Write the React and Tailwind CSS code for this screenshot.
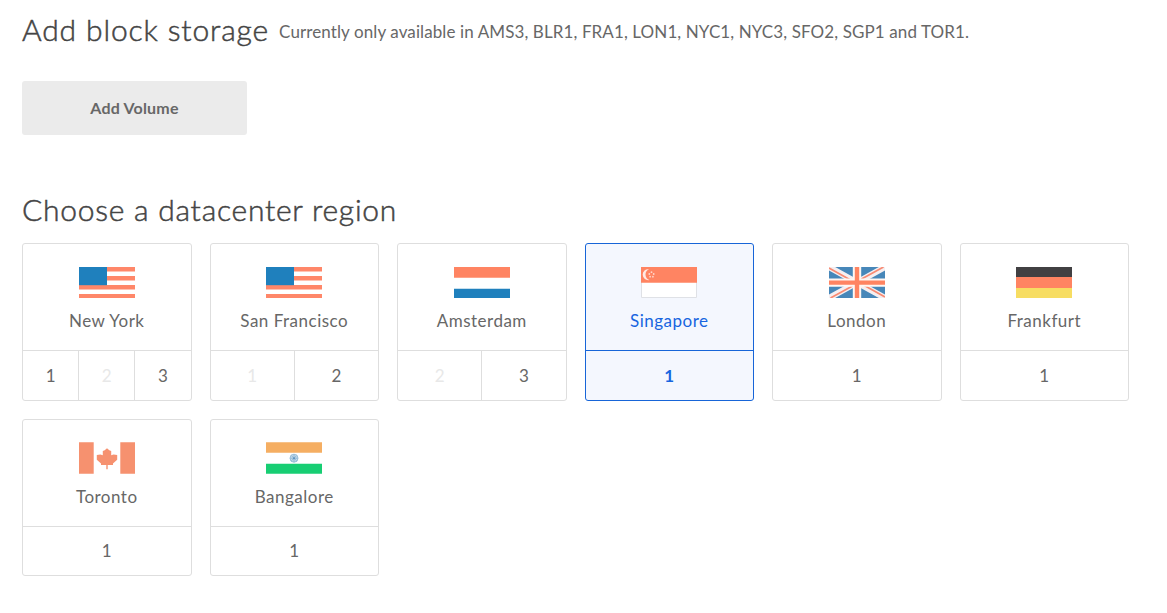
import React, { useState } from "react";
import clsx from "clsx";

const UsFlag = () => (
  <svg width="56" height="31" viewBox="0 0 56 31">
    <path d="M0 0H56V31H0Z" fill="#fff" />
    <path d="M0 0H56V4.6H0ZM0 9H56V13.6H0ZM0 18H56V22.6H0ZM0 27H56V31H0Z" fill="#ff8769" />
    <path d="M0 0H28V18.2H0Z" fill="#1f80bd" />
  </svg>
);

const NlFlag = () => (
  <svg width="56" height="31" viewBox="0 0 56 31">
    <path d="M0 0H56V10.7H0Z" fill="#ff8462" />
    <path d="M0 21.7H56V31H0Z" fill="#1f80bd" />
  </svg>
);

const SgFlag = () => (
  <svg width="56" height="31" viewBox="0 0 56 31">
    <path d="M.5 .5H55.5V30.5H.5Z" fill="#fff" stroke="#dfe1e6" />
    <path d="M0 0H56V15.7H0Z" fill="#ff8462" />
    <path d="M8 2.2A5.5 5.5 0 1 0 8.4 13A5.8 5.8 0 0 1 8 2.2Z" fill="#ffeae4" />
    <g fill="#ffd5c8">
      <circle cx="10.5" cy="5.2" r=".9" />
      <circle cx="8.3" cy="7" r=".9" />
      <circle cx="12.7" cy="7" r=".9" />
      <circle cx="9.1" cy="9.7" r=".9" />
      <circle cx="11.9" cy="9.7" r=".9" />
    </g>
  </svg>
);

const UkFlag = () => (
  <svg width="56" height="31" viewBox="0 0 56 31">
    <path d="M0 0H56V31H0Z" fill="#4787b9" />
    <path d="M0 0L56 31M56 0L0 31" stroke="#f5eff1" strokeWidth="6" />
    <path d="M0 1L26 15.5M54.5 0L28 14.5M1.5 31L28 16.5M56 30L30 15.5" stroke="#f88a72" strokeWidth="1.7" />
    <path d="M28 0V31M0 15.6H56" stroke="#fff7f3" strokeWidth="8.4" />
    <path d="M28 0V31M0 15.6H56" stroke="#ff8462" strokeWidth="4.4" />
  </svg>
);

const DeFlag = () => (
  <svg width="56" height="31" viewBox="0 0 56 31">
    <path d="M0 0H56V10.3H0Z" fill="#414042" />
    <path d="M0 10H56V21H0Z" fill="#ff8462" />
    <path d="M0 21H56V31H0Z" fill="#f7dd62" />
  </svg>
);

const CaFlag = () => (
  <svg width="56" height="32" viewBox="0 0 56 32">
    <path d="M0 .3H14.7V31.7H0ZM41.3 .3H56V31.7H41.3Z" fill="#f6916f" />
    <path
      d="M28 6.2L30.3 8.3L32.2 9V13.2L34.6 12.4L38.2 13V16.6L38.2 17.8L34 21.4V22.9H28.7V27.2H27.3V22.9H22V21.4L17.8 17.8V13L21.4 12.4L23.8 13.2V9L25.7 8.3Z"
      fill="#f6916f"
    />
  </svg>
);

const InFlag = () => (
  <svg width="56" height="32" viewBox="0 0 56 32">
    <path d="M0 .3H56V10.8H0Z" fill="#f5ae62" />
    <path d="M0 21.7H56V31.7H0Z" fill="#17ce73" />
    <circle cx="28" cy="16.2" r="4" fill="#c5dbea" stroke="#9abfd9" strokeWidth="1" />
    <path d="M28 12.5V20M24.3 16.2H31.7M25.4 13.6L30.6 18.8M30.6 13.6L25.4 18.8" stroke="#86b0d0" strokeWidth=".8" />
    <circle cx="28" cy="16.2" r="1" fill="#5c92be" />
  </svg>
);

const regions = [
  { name: "New York", Flag: UsFlag, zones: [1, 2, 3], disabled: [2] },
  { name: "San Francisco", Flag: UsFlag, zones: [1, 2], disabled: [1] },
  { name: "Amsterdam", Flag: NlFlag, zones: [2, 3], disabled: [2] },
  { name: "Singapore", Flag: SgFlag, zones: [1], disabled: [] },
  { name: "London", Flag: UkFlag, zones: [1], disabled: [] },
  { name: "Frankfurt", Flag: DeFlag, zones: [1], disabled: [] },
  { name: "Toronto", Flag: CaFlag, zones: [1], disabled: [] },
  { name: "Bangalore", Flag: InFlag, zones: [1], disabled: [] },
];

const RegionCard = ({ region, selected, onSelect }) => {
  const { name, Flag, zones, disabled } = region;
  const active = selected.name === name;

  return (
    <div
      className={clsx(
        "flex flex-col rounded-[3px] border text-[17px]",
        active ? "border-[#1765d8] bg-[#f4f7fe] text-[#1765e0]" : "border-[#dedede] bg-white text-[#676767]"
      )}
    >
      <div
        className={clsx(
          "flex h-[107px] flex-col items-center justify-end border-b pb-[17px]",
          active ? "border-[#1765d8]" : "border-[#dedede]"
        )}
      >
        <Flag />
        <p className="mt-[11px] leading-6 tracking-[0.5px]">{name}</p>
      </div>

      <div className={clsx("flex flex-1 divide-x", active ? "divide-[#1765d8]" : "divide-[#dedede]")}>
        {zones.map((zone) => (
          <button
            key={zone}
            disabled={disabled.includes(zone)}
            onClick={() => onSelect({ name, zone })}
            className={clsx(
              "flex-1",
              disabled.includes(zone) && "text-[#e8e8e8]",
              active && selected.zone === zone && "font-bold"
            )}
          >
            {zone}
          </button>
        ))}
      </div>
    </div>
  );
};

const App = () => {
  const [selected, setSelected] = useState({ name: "Singapore", zone: 1 });

  return (
    <div className="min-h-screen bg-white pt-[9px] pr-[38px] pl-[22px] font-[Lato,sans-serif]">
      {/* Block storage */}
      <div className="flex items-start gap-[10px] whitespace-nowrap">
        <h2 className="text-[30px] leading-10 font-light tracking-[0.87px] text-[#444] [-webkit-text-stroke:0.5px_#444]">
          Add block storage
        </h2>
        <p className="pt-[11px] text-[17px] leading-6 tracking-[0.1px] text-[#676767]">
          Currently only available in AMS3, BLR1, FRA1, LON1, NYC1, NYC3, SFO2, SGP1 and TOR1.
        </p>
      </div>
      <button className="mt-8 block h-[54px] w-[225px] rounded-[3px] bg-[#ebebeb] text-base font-bold tracking-[0.2px] text-[#676767]">
        Add Volume
      </button>

      {/* Datacenter regions */}
      <h2 className="mt-[54px] text-[30px] leading-10 font-light tracking-[0.75px] text-[#444] [-webkit-text-stroke:0.5px_#444]">
        Choose a datacenter region
      </h2>
      <div className="mt-[14px] grid grid-cols-6 grid-rows-[158px_157px] gap-[18px]">
        {regions.map((region) => (
          <RegionCard key={region.name} region={region} selected={selected} onSelect={setSelected} />
        ))}
      </div>
    </div>
  );
};

export default App;
